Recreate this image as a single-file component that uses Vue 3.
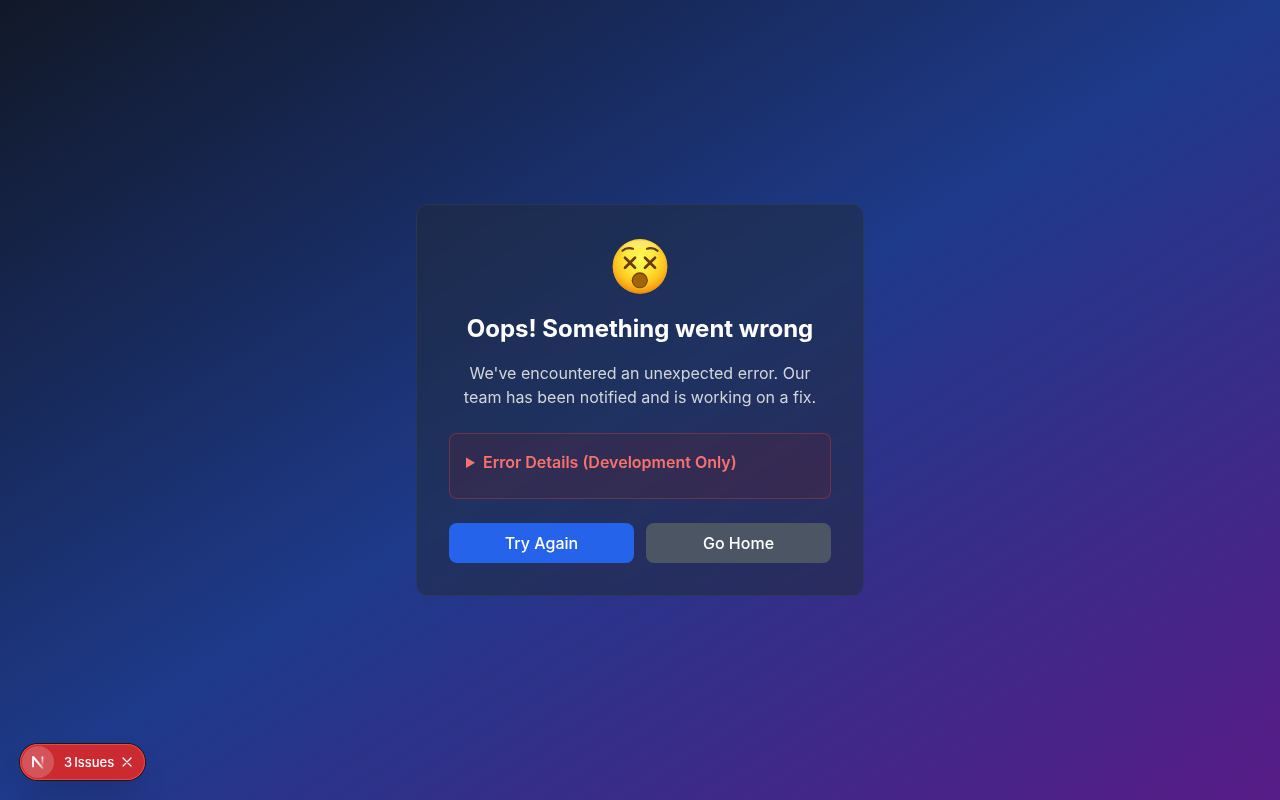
<script setup>
import { ref } from 'vue'

const issues = ref(3)
const showIssues = ref(true)

function retry() {
  window.location.reload()
}
</script>

<template>
  <main class="page">
    <section class="card">
      <div class="face">
        <svg viewBox="0 1 56 56" width="56" height="56" role="img" aria-hidden="true">
          <defs>
            <radialGradient id="skin" cx="0.5" cy="0.38" r="0.64">
              <stop offset="0" stop-color="#fffb55" />
              <stop offset="0.4" stop-color="#ffe736" />
              <stop offset="0.7" stop-color="#fdc421" />
              <stop offset="0.88" stop-color="#f59f12" />
              <stop offset="1" stop-color="#dd7c10" />
            </radialGradient>
            <linearGradient id="shine" x1="0" y1="0" x2="0" y2="1">
              <stop offset="0" stop-color="#fff4a8" stop-opacity="0.6" />
              <stop offset="1" stop-color="#fff04e" stop-opacity="0" />
            </linearGradient>
          </defs>
          <circle cx="28" cy="28.5" r="27.4" fill="url(#skin)" />
          <ellipse cx="28" cy="13.5" rx="19" ry="11" fill="url(#shine)" />
          <g fill="none" stroke="#6d3908" stroke-linecap="round" stroke-linejoin="round">
            <path d="M10.4 12.8Q14.6 9 21 10.8" stroke-width="2.2" />
            <path d="M35 10.8Q41.2 9 45.6 12.8" stroke-width="2.2" />
            <path d="M13 19.7L23 29.7M23 19.7L13 29.7M33 19.7L43 29.7M43 19.7L33 29.7" stroke-width="2.7" />
          </g>
          <ellipse cx="27.8" cy="42.3" rx="8.1" ry="8" fill="#764109" />
          <ellipse cx="27.8" cy="42.7" rx="6.9" ry="6.9" fill="#a16508" />
        </svg>
      </div>
      <h1>Oops! Something went wrong</h1>
      <p>We've encountered an unexpected error. Our team has been notified and is working on a fix.</p>
      <details class="details">
        <summary>Error Details (Development Only)</summary>
      </details>
      <div class="actions">
        <button class="primary" type="button" @click="retry">Try Again</button>
        <button class="secondary" type="button">Go Home</button>
      </div>
    </section>

    <div v-if="showIssues" class="badge">
      <button class="logo" type="button" aria-label="Open dev tools">
        <svg width="14" height="14" viewBox="0 0 14 14" fill="none">
          <defs>
            <linearGradient id="diagonal" x1="8" y1="8" x2="13" y2="14" gradientUnits="userSpaceOnUse">
              <stop stop-color="#fff" />
              <stop offset="0.7" stop-color="#fff" stop-opacity="0.5" />
              <stop offset="1" stop-color="#fff" stop-opacity="0" />
            </linearGradient>
            <linearGradient id="stem" x1="11" y1="1" x2="11" y2="11" gradientUnits="userSpaceOnUse">
              <stop stop-color="#fff" />
              <stop offset="1" stop-color="#fff" stop-opacity="0" />
            </linearGradient>
          </defs>
          <path d="M2 12.2V1.6" stroke="#fff" stroke-width="1.8" />
          <path d="M1.1 1.6H3.3L13 13.4L11.4 14.4L2 3.6Z" fill="url(#diagonal)" />
          <path d="M11.4 1.6V11" stroke="url(#stem)" stroke-width="1.8" />
        </svg>
      </button>
      <button class="issues" type="button"><span>{{ issues }}</span><span>Issues</span></button>
      <button class="close" type="button" aria-label="Hide issues" @click="showIssues = false">
        <svg width="10" height="10" viewBox="0 0 10 10" fill="none">
          <path d="M1 1L9 9M9 1L1 9" stroke="#fff" stroke-width="1.2" stroke-linecap="round" />
        </svg>
      </button>
    </div>
  </main>
</template>

<style>
body {
  margin: 0;
}
</style>

<style scoped>
* {
  box-sizing: border-box;
}

.page {
  display: flex;
  align-items: center;
  justify-content: center;
  min-height: 100vh;
  padding: 16px;
  background: linear-gradient(to bottom right, #111827, #1e3a8a, #581c87);
  font-family: Inter, "Liberation Sans", sans-serif;
  font-size: 16px;
  line-height: 24px;
}

button {
  border: 0;
  padding: 0;
  color: #fff;
  font: inherit;
  cursor: pointer;
}

svg {
  display: block;
}

.card {
  width: 100%;
  max-width: 448px;
  padding: 32px;
  border: 1px solid rgba(55, 65, 81, 0.5);
  border-radius: 12px;
  background: rgba(31, 41, 55, 0.5);
  backdrop-filter: blur(4px);
  text-align: center;
}

.face {
  display: flex;
  align-items: center;
  justify-content: center;
  height: 60px;
  margin-bottom: 16px;
}

h1 {
  margin: 0 0 16px;
  color: #fff;
  font-size: 24px;
  font-weight: 700;
  line-height: 32px;
}

p {
  margin: 0 0 24px;
  color: #d1d5db;
}

.details {
  margin-bottom: 24px;
  padding: 16px;
  border: 1px solid rgba(239, 68, 68, 0.3);
  border-radius: 8px;
  background: rgba(127, 29, 29, 0.2);
  text-align: left;
}

summary {
  margin-bottom: 8px;
  color: #f87171;
  font-weight: 600;
  cursor: pointer;
}

.actions {
  display: flex;
  gap: 12px;
}

.actions button {
  flex: 1;
  padding: 8px 16px;
  border-radius: 8px;
  font-weight: 500;
}

.actions .primary {
  background: #2563eb;
}

.actions .secondary {
  background: #4b5563;
}

.badge {
  position: fixed;
  bottom: 20px;
  left: 20px;
  display: flex;
  align-items: center;
  height: 36px;
  padding: 2px;
  border-radius: 18px;
  background: #ca2a30;
  box-shadow: 0 0 0 1px #171717, inset 0 0 0 1px #e5484d, 0 16px 32px -8px rgba(0, 0, 0, 0.24);
  font-size: 13px;
  font-weight: 500;
  line-height: 16px;
}

.logo {
  display: grid;
  place-items: center;
  width: 32px;
  height: 32px;
  border-radius: 50%;
  background: rgba(255, 255, 255, 0.2);
}

.issues {
  display: flex;
  gap: 2px;
  margin-left: 10px;
  background: none;
}

.close {
  display: grid;
  place-items: center;
  width: 24px;
  height: 24px;
  margin: 0 4px 0 1px;
  background: none;
}
</style>
